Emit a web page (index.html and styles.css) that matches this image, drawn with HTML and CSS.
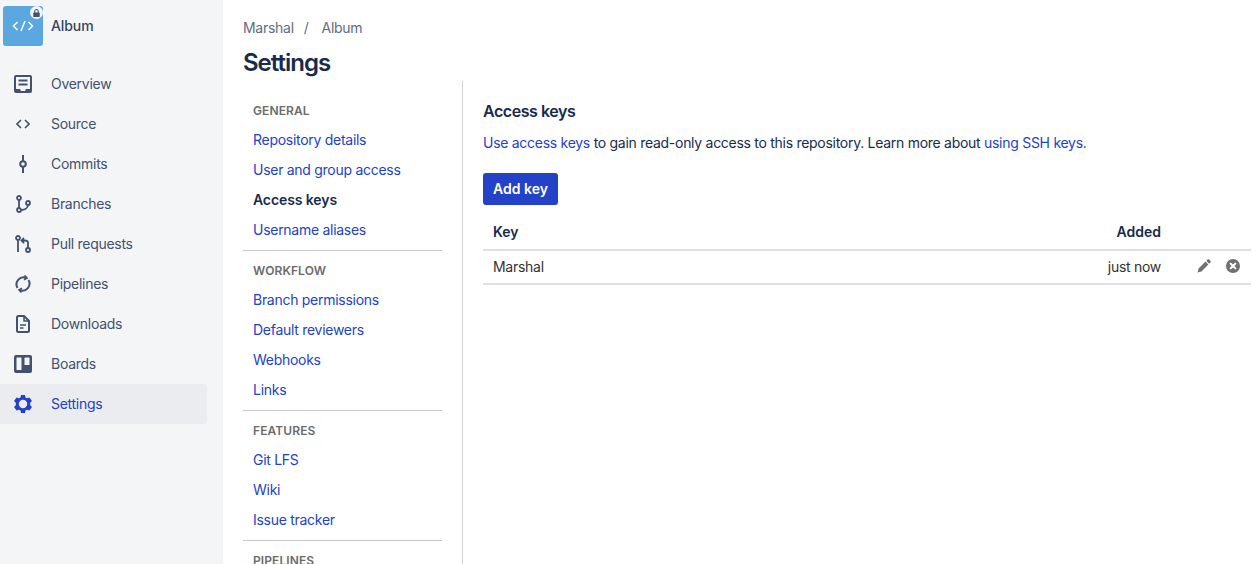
FILE: index.html
```html
<!DOCTYPE html>
<html lang="en">
<head>
<meta charset="utf-8">
<title>Settings</title>
<link rel="stylesheet" href="styles.css">
</head>
<body>
<div class="app">
  <aside class="sidebar">
    <div class="repo">
      <div class="repo-logo">
        <svg width="22" height="14" viewBox="0 0 22 14" fill="none" stroke="#fff" stroke-width="1.4"><path d="M5.500 3 1.500 7l4 4M16.500 3l4 4-4 4M13 2 9 12"/></svg>
        <span class="lock"><svg width="7" height="8" viewBox="0 0 8 9"><path fill="#42526E" d="M1 4h6a.7.7 0 0 1 .7.7v3.600a.7.7 0 0 1-.7.7H1a.7.7 0 0 1-.7-.7V4.700A.7.7 0 0 1 1 4z"/><path fill="none" stroke="#42526E" stroke-width="1.200" d="M2 4.500V2.600a2 2 0 0 1 4 0v1.900"/></svg></span>
      </div>
      <span class="repo-name">Album</span>
    </div>
    <nav class="side-nav">
      <a class="side-item"><span class="side-icon"><svg width="18" height="18" viewBox="0 0 18 18"><path fill="#42526E" fill-rule="evenodd" d="M2 0h14a2 2 0 0 1 2 2v14a2 2 0 0 1-2 2H2a2 2 0 0 1-2-2V2a2 2 0 0 1 2-2zm0 2v12h4l1 2h4l1-2h4V2H2zm2.500 2.500h9v2h-9v-2zm0 4h9v2h-9v-2z"/></svg></span><span class="side-label">Overview</span></a>
      <a class="side-item"><span class="side-icon"><svg width="14" height="10" viewBox="0 0 14 10" fill="none" stroke="#42526E" stroke-width="1.600"><path d="M5 1 1 5l4 4M9 1l4 4-4 4"/></svg></span><span class="side-label">Source</span></a>
      <a class="side-item"><span class="side-icon"><svg width="8" height="18" viewBox="0 0 8 18" fill="none" stroke="#42526E" stroke-width="2"><circle cx="4" cy="9" r="2.800"/><path d="M4 0v6M4 12v6"/></svg></span><span class="side-label">Commits</span></a>
      <a class="side-item"><span class="side-icon"><svg width="15" height="18" viewBox="0 0 15 18" fill="none" stroke="#42526E" stroke-width="1.800"><circle cx="3" cy="3" r="2"/><circle cx="3" cy="15" r="2"/><circle cx="12" cy="8" r="2"/><path d="M3 5v8M5 15c4 0 7-2 7-5"/></svg></span><span class="side-label">Branches</span></a>
      <a class="side-item"><span class="side-icon"><svg width="16" height="18" viewBox="0 0 16 18" fill="none" stroke="#42526E" stroke-width="1.800"><circle cx="3" cy="3" r="2"/><circle cx="13" cy="15" r="2"/><path d="M3 5v12M13 13V7.500C13 6 12 5.500 10 5.500H7M9 3 6.500 5.500 9 8"/></svg></span><span class="side-label">Pull requests</span></a>
      <a class="side-item"><span class="side-icon"><svg width="18" height="18" viewBox="0 0 18 18" fill="none" stroke="#42526E" stroke-width="2"><path d="M3.500 13A7 7 0 0 1 12 2.900M14.500 5A7 7 0 0 1 6 15.100"/><path d="M10.500 0.500 13 3l-3 1.800M7.500 17.500 5 15l3-1.800" stroke-width="1.600"/></svg></span><span class="side-label">Pipelines</span></a>
      <a class="side-item"><span class="side-icon"><svg width="14" height="18" viewBox="0 0 14 18" fill="none" stroke="#42526E" stroke-width="2"><path d="M2.500 1H8l5 5v9.500a1.500 1.500 0 0 1-1.500 1.500h-9A1.500 1.500 0 0 1 1 15.500v-13A1.500 1.500 0 0 1 2.500 1z"/><path d="M8 1v5h5" stroke-width="1.500"/><path d="M4 10h6M4 13h3.500" stroke-width="1.500"/></svg></span><span class="side-label">Downloads</span></a>
      <a class="side-item"><span class="side-icon"><svg width="18" height="18" viewBox="0 0 18 18"><path fill="#42526E" fill-rule="evenodd" d="M2 0h14a2 2 0 0 1 2 2v14a2 2 0 0 1-2 2H2a2 2 0 0 1-2-2V2a2 2 0 0 1 2-2zm1 2.500a.5.5 0 0 0-.5.500v11.500a.5.5 0 0 0 .5.5h4a.5.5 0 0 0 .5-.5V3a.5.5 0 0 0-.5-.5H3zm8 0a.5.5 0 0 0-.5.500v6.500a.5.5 0 0 0 .5.5h4a.5.5 0 0 0 .5-.5V3a.5.5 0 0 0-.5-.5h-4z"/></svg></span><span class="side-label">Boards</span></a>
      <a class="side-item active"><span class="side-icon"><svg width="18" height="18" viewBox="0 0 18 18"><path fill="#2342C8" fill-rule="evenodd" d="M7 0h4l.5 2.500 1.500.8L15.400 2.500 18 6l-1.800 1.800v2.400L18 12l-2.600 3.500-2.400-.8-1.500.8L11 18H7l-.5-2.500-1.500-.8-2.400.8L0 12l1.800-1.800V7.800L0 6l2.600-3.500 2.400.8 1.500-.8L7 0zm2 4.800a4.200 4.200 0 1 0 0 8.400 4.200 4.200 0 0 0 0-8.400z"/></svg></span><span class="side-label">Settings</span></a>
    </nav>
  </aside>
  <main class="main">
    <div class="crumbs"><span>Marshal</span><span class="slash">/</span><span>Album</span></div>
    <h1 class="title">Settings</h1>
    <div class="columns">
      <nav class="sub-nav">
        <section class="group">
          <h2 class="group-title">GENERAL</h2>
          <a class="sub-link">Repository details</a>
          <a class="sub-link">User and group access</a>
          <a class="sub-link current">Access keys</a>
          <a class="sub-link">Username aliases</a>
        </section>
        <section class="group">
          <h2 class="group-title">WORKFLOW</h2>
          <a class="sub-link">Branch permissions</a>
          <a class="sub-link">Default reviewers</a>
          <a class="sub-link">Webhooks</a>
          <a class="sub-link">Links</a>
        </section>
        <section class="group">
          <h2 class="group-title">FEATURES</h2>
          <a class="sub-link">Git LFS</a>
          <a class="sub-link">Wiki</a>
          <a class="sub-link">Issue tracker</a>
        </section>
        <section class="group">
          <h2 class="group-title">PIPELINES</h2>
        </section>
      </nav>
      <section class="content">
        <h2 class="content-title">Access keys</h2>
        <p class="intro"><a class="link">Use access keys</a> to gain read-only access to this repository. Learn more about <a class="link">using SSH keys</a>.</p>
        <button class="btn">Add key</button>
        <div class="table">
          <div class="row head"><span class="cell-key">Key</span><span class="cell-added">Added</span><span class="cell-actions"></span></div>
          <div class="row body-row"><span class="cell-key">Marshal</span><span class="cell-added">just now</span>
            <span class="cell-actions">
              <svg width="14" height="14" viewBox="0 0 14 14"><path fill="#707070" d="M10.500.6a1.200 1.200 0 0 1 1.700 0l1.200 1.200a1.200 1.200 0 0 1 0 1.700L12.200 4.700 9.300 1.800zM8.500 2.600l2.900 2.900-6.900 6.900L.6 13.400l1-3.900z"/></svg>
              <svg width="14" height="14" viewBox="0 0 14 14"><path fill="#707070" fill-rule="evenodd" d="M7 0a7 7 0 1 1 0 14A7 7 0 0 1 7 0zM4.800 3.400 3.400 4.800 5.600 7 3.400 9.200l1.400 1.400L7 8.400l2.200 2.200 1.400-1.400L8.400 7l2.200-2.200-1.400-1.400L7 5.600z"/></svg>
            </span>
          </div>
        </div>
      </section>
    </div>
  </main>
</div>
</body>
</html>
```
FILE: styles.css
```css
* { box-sizing: border-box; }
html, body { margin: 0; height: 100%; overflow: hidden; background: #fff; }
body { font-family: Inter, "Liberation Sans", sans-serif; font-size: 14px; color: #172B4D; letter-spacing: -0.28px; }
.app { display: flex; height: 564px; overflow: hidden; }
.sidebar { width: 223px; flex: none; background: #F4F5F7; padding-top: 6px; }
.repo { display: flex; align-items: center; padding-left: 3px; height: 40px; }
.repo-logo { position: relative; width: 40px; height: 40px; background: #5BA8E0; border-radius: 3px; display: flex; align-items: center; justify-content: center; }
.lock { position: absolute; top: 0; right: 0; width: 13px; height: 13px; border-radius: 50%; background: #F4F5F7; display: flex; align-items: center; justify-content: center; }
.repo-name { margin: 0 0 2px 8px; font-weight: 500; color: #344563; letter-spacing: -0.1px; }
.side-nav { margin-top: 18px; width: 207px; }
.side-item { display: flex; align-items: center; height: 40px; padding-left: 14px; color: #42526E; border-radius: 0 3px 3px 0; }
.side-label { margin-bottom: 2px; }
.side-icon { width: 18px; height: 18px; margin-right: 19px; display: flex; align-items: center; justify-content: center; flex: none; }
.side-item.active { background: #EBECF0; color: #2342C8; }
.main { flex: 1; min-width: 0; padding: 20px 8px 0 20px; }
.crumbs { display: flex; height: 16px; line-height: 16px; color: #5E6C84; }
.slash { margin: 0 13px 0 10px; }
.title { margin: 12px 0 0; font-size: 24px; line-height: 30px; font-weight: 600; color: #172B4D; letter-spacing: -1px; }
.columns { display: flex; margin-top: 3px; }
.sub-nav { width: 220px; flex: none; padding-right: 20px; border-right: 1px solid #D0D0D0; }
.group { padding: 22px 0 5px; border-bottom: 1px solid #C8C8C8; }
.group + .group { padding-top: 12px; }
.group:last-child { border-bottom: 0; }
.group-title { margin: 0 0 6px 10px; font-size: 12px; line-height: 16px; font-weight: 600; color: #6B6B6B; letter-spacing: 0.1px; }
.sub-link { display: block; height: 30px; line-height: 30px; padding-left: 10px; color: #2342C8; }
.sub-link.current { color: #172B4D; font-weight: 600; letter-spacing: -0.1px; }
.content { flex: 1; min-width: 0; padding: 20px 0 0 20px; }
.content-title { margin: 0; font-size: 16px; line-height: 20px; font-weight: 600; color: #172B4D; letter-spacing: -0.45px; }
.intro { margin: 12px 0 0; line-height: 20px; color: #172B4D; }
.link { color: #2342C8; }
.btn { display: block; margin-top: 20px; height: 32px; width: 75px; padding: 0 0 2px; border: 0; border-radius: 3px; background: #2342C8; color: #fff; font: 600 14px Inter, "Liberation Sans", sans-serif; }
.table { margin-top: 10px; }
.row { display: flex; align-items: center; height: 34px; border-bottom: 2px solid #DFE1E6; padding-left: 10px; color: #333; }
.row.head { height: 36px; padding-bottom: 2px; font-weight: 600; color: #172B4D; letter-spacing: 0; }
.body-row { padding-bottom: 2px; }
.cell-key { flex: 1; }
.cell-actions { width: 90px; display: flex; gap: 15px; padding-left: 36px; align-items: center; }
```
